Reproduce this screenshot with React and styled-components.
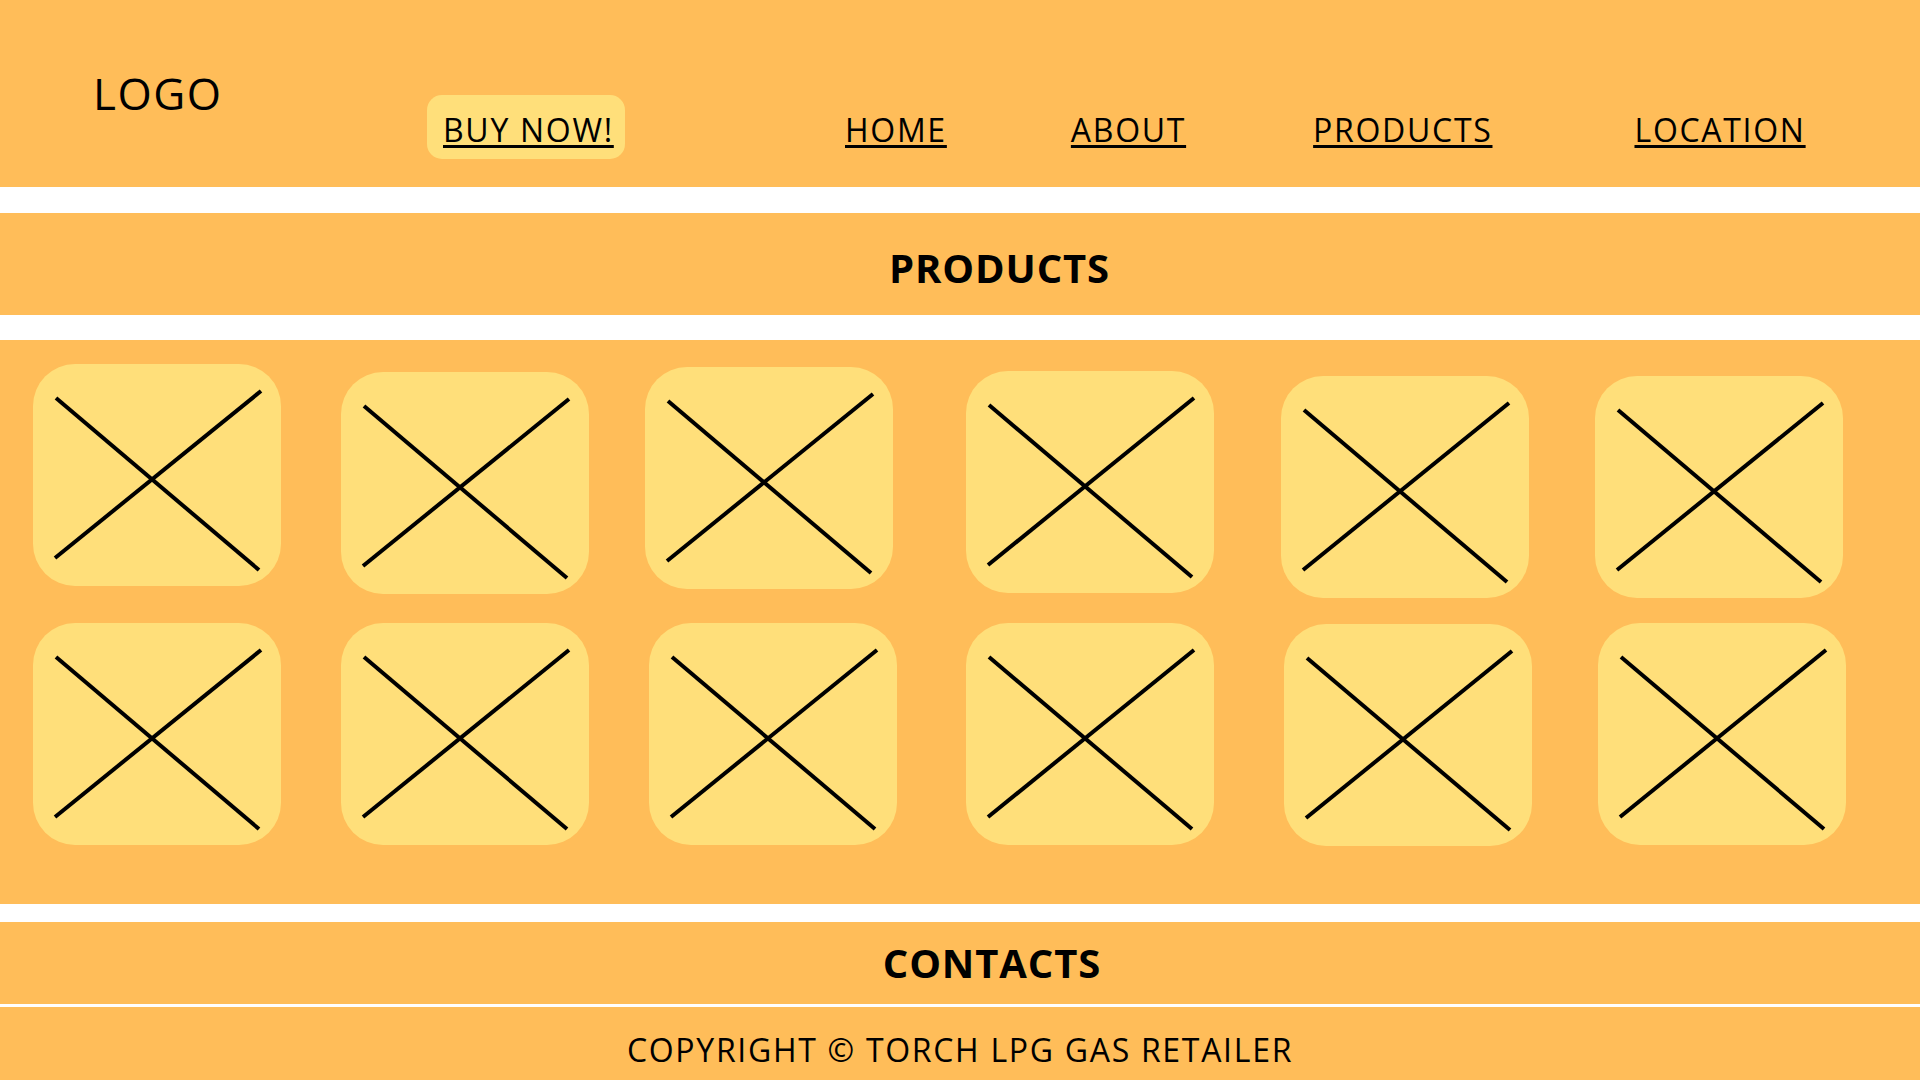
import React from "react";
import styled, { createGlobalStyle } from "styled-components";

const ORANGE = "#FFBD59";
const YELLOW = "#FFDF7A";

const Global = createGlobalStyle`
  html, body { margin: 0; padding: 0; background: #ffffff; }
  body { font-family: "Open Sans", "Noto Sans", sans-serif; color: #000; }
  * { box-sizing: border-box; }
`;

const Page = styled.div`
  width: 1920px;
  height: 1080px;
  display: flex;
  flex-direction: column;
  background: #ffffff;
  overflow: hidden;
`;

const Header = styled.header`
  height: 187px;
  flex: none;
  background: ${ORANGE};
  display: flex;
  align-items: flex-start;
  padding-left: 93px;
`;

const Logo = styled.div`
  font-size: 44px;
  line-height: 1;
  margin-top: 71px;
  letter-spacing: 1.5px;
`;

const Nav = styled.nav`
  display: flex;
  align-items: center;
  margin-top: 95px;
  margin-left: auto;
  width: 1493px;
`;

const linkText = `
  font-size: 32px;
  letter-spacing: 1.7px;
  color: #000;
  text-decoration: underline;
  text-decoration-thickness: 3px;
  text-underline-offset: 3px;
`;

const BuyButton = styled.a`
  width: 198px;
  height: 64px;
  border-radius: 15px;
  background: ${YELLOW};
  display: flex;
  align-items: center;
  justify-content: flex-start;
  padding: 4px 0 0 16px;
  ${linkText}
`;

const NavLink = styled.a`
  margin-left: ${(p) => p.$ml}px;
  padding-top: 4px;
  ${linkText}
`;

const Bar = styled.section`
  flex: none;
  height: ${(p) => p.$h}px;
  margin-top: ${(p) => p.$mt}px;
  background: ${ORANGE};
  display: flex;
  align-items: center;
  justify-content: center;
  padding-left: ${(p) => p.$pl || 0}px;
  padding-top: ${(p) => p.$pt || 0}px;
`;

const Heading = styled.h2`
  margin: 0;
  font-size: 40px;
  font-weight: 700;
  line-height: 1;
  letter-spacing: 0.9px;
`;

const Copyright = styled.p`
  margin: 0;
  font-size: 32px;
  font-weight: 400;
  line-height: 1;
  letter-spacing: 1.7px;
`;

const Grid = styled.section`
  flex: none;
  height: 564px;
  margin-top: 25px;
  background: ${ORANGE};
  display: grid;
  grid-template-columns: repeat(6, 248px);
  grid-template-rows: 222px 222px;
  column-gap: 64px;
  row-gap: 37px;
  padding: 24px 0 0 33px;
`;

const Card = styled.div`
  width: 248px;
  height: 222px;
  margin-left: ${(p) => p.$dx}px;
  margin-top: ${(p) => p.$dy}px;
  border-radius: 42px;
  background: ${YELLOW};
  overflow: hidden;
`;

const Cross = () => (
  <svg width="248" height="222" viewBox="0 0 248 222">
    <line x1="23" y1="34" x2="226" y2="206" stroke="#000" strokeWidth="4" />
    <line x1="22" y1="194" x2="228" y2="27" stroke="#000" strokeWidth="4" />
  </svg>
);

const cards = [
  [0, 0], [-4, 8], [-12, 3], [-3, 7], [0, 12], [2, 12],
  [0, 0], [-4, 0], [-8, 0], [-3, 0], [3, 1], [5, 0],
];

export default function App() {
  return (
    <>
      <Global />
      <Page>
        <Header>
          <Logo>LOGO</Logo>
          <Nav>
            <BuyButton>BUY NOW!</BuyButton>
            <NavLink $ml={220}>HOME</NavLink>
            <NavLink $ml={124}>ABOUT</NavLink>
            <NavLink $ml={127}>PRODUCTS</NavLink>
            <NavLink $ml={142}>LOCATION</NavLink>
          </Nav>
        </Header>
        <Bar $h={102} $mt={26} $pl={79} $pt={8}>
          <Heading>PRODUCTS</Heading>
        </Bar>
        <Grid>
          {cards.map(([dx, dy], i) => (
            <Card key={i} $dx={dx} $dy={dy}>
              <Cross />
            </Card>
          ))}
        </Grid>
        <Bar $h={82} $mt={18} $pl={64}>
          <Heading>CONTACTS</Heading>
        </Bar>
        <Bar $h={73} $mt={3} $pt={12}>
          <Copyright>COPYRIGHT © TORCH LPG GAS RETAILER</Copyright>
        </Bar>
      </Page>
    </>
  );
}
